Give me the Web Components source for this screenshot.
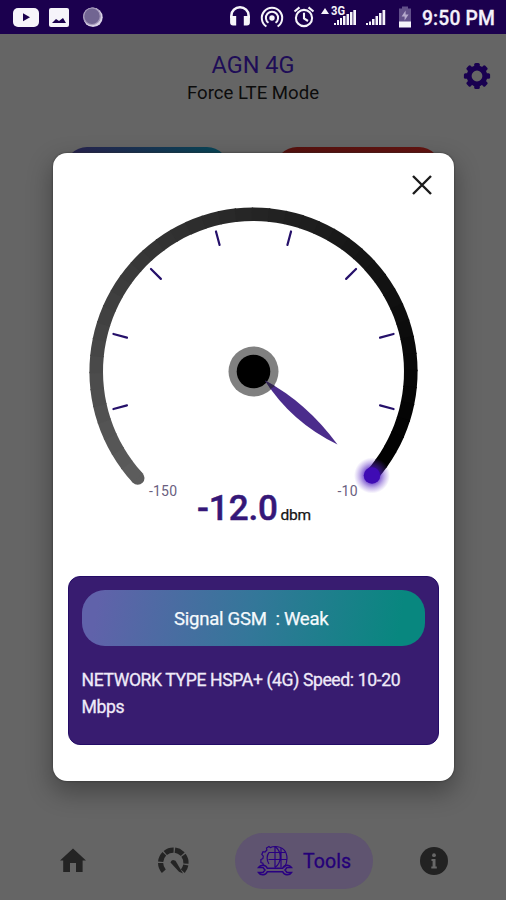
<!DOCTYPE html>
<html lang="en"><head><meta charset="utf-8"><title>AGN 4G</title>
<style>
body{margin:0;width:506px;height:900px;overflow:hidden;font-family:Roboto,"Liberation Sans",sans-serif;background:#656565}
</style></head><body>
<agn-app></agn-app>
<script>
const define=(name,html)=>customElements.define(name,class extends HTMLElement{
  constructor(){super();const t=document.createElement('template');t.innerHTML=html;
    this.attachShadow({mode:'open'}).append(t.content.cloneNode(true));}
});

define('status-bar',`<style>
:host{display:flex;height:34px;box-sizing:border-box;background:#1b004e;color:#f4f0fa;padding-left:13px;align-items:flex-start}
svg{display:block;flex:none;height:34px;fill:#f6f4fa;stroke:none}
.time{font-size:19.3px;font-weight:500;line-height:34px;padding-top:2px;margin-left:10px;white-space:nowrap;letter-spacing:.15px;-webkit-text-stroke:.3px}
</style>
<svg width="26" viewBox="0 0 26 34"><rect y="8" width="26" height="19" rx="5"/><path d="M10 13.2v8l7-4z" fill="#1b004e"/></svg>
<svg width="20" viewBox="0 0 20 34" style="margin-left:10px"><rect y="8" width="20" height="19" rx="2"/><path d="M3 23l4-4 3 2 4-3 3 5z" fill="#1b004e"/></svg>
<svg width="20" viewBox="0 0 20 34" style="margin-left:14px"><circle cx="10" cy="17.3" r="9.7" fill="#d9d2e6"/><circle cx="9" cy="16.3" r="8.5" fill="#716592"/><circle cx="9" cy="16.3" r="8.3" fill="none" stroke="#a89cbd" stroke-width="1.2"/></svg>
<svg width="20" viewBox="0 0 20 34" style="margin-left:127px"><path d="M1.4 18v-2.600a8.6 8.2 0 0 1 17.2 0V18" fill="none" stroke="#f6f4fa" stroke-width="2.6"/><path d="M.1 16h6.1v9.6H3.1a3 3 0 0 1-3-3zM13.8 16h6.1v6.6a3 3 0 0 1-3 3h-3.1z"/></svg>
<svg width="24" viewBox="0 0 24 34" style="margin-left:10px"><g fill="none" stroke="#f6f4fa" stroke-width="2"><path d="M6.4 26.5a10.2 10.2 0 1 1 11.2 0"/><path d="M8.5 22.8a6.1 6.1 0 1 1 7 0"/></g><circle cx="12" cy="18" r="2.7"/></svg>
<svg width="22" viewBox="0 0 22 34" style="margin-left:9px"><g fill="none" stroke="#f6f4fa" stroke-width="2.1"><circle cx="11" cy="18" r="8.1"/><path d="M11 12.8v5.7l4 2.5M1.5 11.5l5-4.1M20.5 11.5l-5-4.1"/></g></svg>
<svg width="36" viewBox="0 0 36 34" style="margin-left:6px"><path d="M0 14l4-6 4 6zM16 20h2v5h-2zM19 18h2v7h-2zM22 16h2.500v9H22zM25.5 14H28v11h-2.5zM29 12h2.5v13H29zM32.3 10h2.7v15h-2.7zM13 23h2v2h-2z"/><text x="10" y="14.500" font-size="12" font-weight="700" font-family="Roboto,sans-serif" textLength="14" lengthAdjust="spacingAndGlyphs">3G</text></svg>
<svg width="20" viewBox="0 0 20 34" style="margin-left:9px"><path d="M0 23h2v2H0zM3 21.5h2V25H3zM6 19h2.5v6H6zM9.5 16H12v9H9.5zM13 13h2.5v12H13zM16.5 10h2.7v15h-2.7z"/></svg>
<svg width="14" viewBox="0 0 14 34" style="margin-left:12px"><path d="M4 6.5h6v2h3v18H1v-18h3z" fill="#62508a"/><path d="M1 21.5h12v6H1z"/><path d="M7.6 10.5l-4 6h3v4l4-6h-3z" fill="#b5a9cc"/></svg>
<span class="time">9:50 PM</span>`);

define('page-header',`<style>
:host{display:grid;grid-template-columns:60px 1fr 60px;height:113px;box-sizing:border-box;padding-top:17px;text-align:center}
h1{margin:0;font-weight:400;font-size:23.5px;line-height:28px;color:#1e0d57}
p{margin:0;font-size:18.6px;line-height:29px;color:#0c0c0c}
svg{margin:11px 0 0 17px;width:28px;height:28px}
</style><span></span><div><h1>AGN 4G</h1><p>Force LTE Mode</p></div>
<svg viewBox="-14 -14 28 28"><g fill="#190050"><circle r="7.9" fill="none" stroke="#190050" stroke-width="5"/>
<g id="t"><rect x="-2.8" y="-13.1" width="5.6" height="5" rx="1.5"/><rect x="-2.8" y="8.1" width="5.6" height="5" rx="1.5"/><rect x="-13.1" y="-2.8" width="5" height="5.6" rx="1.5"/><rect x="8.1" y="-2.8" width="5" height="5.6" rx="1.5"/></g><use href="#t" transform="rotate(45)"/></g></svg>`);

define('mode-buttons',`<style>
:host{display:grid;grid-template-columns:164px 166px;gap:46px;padding-left:65px;height:673px;align-items:start;box-sizing:border-box}
i{display:block;height:60px;border-radius:22px}
.a{background:linear-gradient(90deg,#29224f,#064858)}.b{background:linear-gradient(90deg,#56110e,#641411)}
</style><i class="a"></i><i class="b"></i>`);

define('nav-bar',`<style>
:host{display:flex;height:80px;align-items:center;box-sizing:border-box;padding:2px 0 0 58px}
svg{display:block;flex:none}
.tools{display:flex;align-items:center;width:138px;height:56px;box-sizing:border-box;border-radius:28px;background:#5f5470;margin-left:46px;padding-left:22px;color:#240078;font-size:19.5px;letter-spacing:.1px;-webkit-text-stroke:.3px}
.tools span{margin-left:10px;padding-top:1px}
</style>
<svg width="30" height="30" viewBox="0 0 30 30"><path d="M15 2.5l13 12h-3.400V26H18v-9h-6v9H5.200V14.500H2z" fill="#242424"/></svg>
<svg width="34" height="34" viewBox="-17 -17 34 34" style="margin-left:68px"><path d="M-9.2 10.2A12.700 12.700 0 1 1 9.800 10.2" fill="none" stroke="#242424" stroke-width="5.200" stroke-dasharray="8.900 1.300"/><path d="M-2.500 1.500Q-2-.8 0-1l2.500.8L10 12.500l-4-1.800z" fill="#242424"/></svg>
<div class="tools" style="margin-left:45px"><svg width="36" height="34" viewBox="0 0 36 34"><g fill="none" stroke="#290081" stroke-width="1.200">
<path d="M18 2.500C16 2.600 14.500 3 13.300 3.600L12 2.500 9.500 4l.4 2L8 8 6 7.700 4.800 10.500l1.500 1.600-.4 2.400-2 1v3l2 .8.600 2.500M18 2.500v21M18 2.500c8 0 12 5 12 12 0 3-.8 6-2.500 9"/>
<path d="M18 2.500c7 5 7 16 0 21M24 4v19.500M12 8.500h16M11.500 15.500h18.500M12 8.500c-2.500 3-2.500 8 0 11.500"/></g><g fill="none" stroke="#290081" stroke-width="1.500">
<path d="M1.500 23.500H6l2 2.500-2 2.500H1.500a5 5 0 0 0 8.800-.8h15.400a5 5 0 0 0 8.800.8H30L28 26l2-2.500h4.500a5 5 0 0 0-8.800.8H10.300a5 5 0 0 0-8.800-.8z"/></g></svg><span>Tools</span></div>
<svg width="28" height="28" viewBox="0 0 28 28" style="margin-left:47px"><circle cx="14" cy="14" r="14" fill="#222"/><g fill="#686868"><circle cx="14" cy="8.200" r="1.900"/><path d="M11.500 12h4v7.500h1.300v2h-5.500v-2h1.300v-5.500h-1.100z"/></g></svg>`);

define('signal-gauge',`<style>
:host{display:block;height:345px;width:400px}
svg{display:block}text{font-family:Roboto,sans-serif}
</style>
<svg width="400" height="345" viewBox="53 193 400 345">
<defs><radialGradient id="glow"><stop offset=".4" stop-color="#4510bd" stop-opacity=".75"/><stop offset=".7" stop-color="#5a2ac4" stop-opacity=".35"/><stop offset="1" stop-color="#6a3bd0" stop-opacity="0"/></radialGradient></defs>
<circle cx="137.700" cy="478" r="6.800" fill="#5c5c5c"/><circle cx="371.500" cy="475.500" r="6.800"/>
<g id="arc" fill="none" stroke-width="13.600"></g>
<g id="marks" stroke="#25106a" stroke-width="2.200" stroke-linecap="round"></g>
<circle cx="253.500" cy="371.500" r="25" fill="#808080"/><circle cx="253.500" cy="371.500" r="16.800"/>
<path d="M265 380.500Q306 402 337.500 444.500Q291 422 265 380.500z" fill="#4b2c8c"/><path d="M265 380.500l10 5.500-4.500 3z" fill="#32264e"/>
<circle cx="372" cy="475.500" r="18" fill="url(#glow)"/><circle cx="372" cy="475.500" r="8.300" fill="#3f0bb4"/>
<g fill="#6a6080" font-size="14"><text x="149" y="496" textLength="28">-150</text><text x="337.500" y="496" textLength="20">-10</text></g>
<text x="197" y="520" font-size="35" font-weight="500" fill="#351778" stroke="#351778" stroke-width=".5" textLength="81">-12.0</text>
<text x="280.500" y="519.500" font-size="15.500" fill="#161616" stroke="#161616" stroke-width=".25" textLength="30.500">dbm</text>
</svg>`);
customElements.define('gauge-dial',class extends customElements.get('signal-gauge'){
  connectedCallback(){
    const cx=253.5,cy=371.5,ns='http://www.w3.org/2000/svg';
    const at=(r,deg)=>[cx+r*Math.cos(deg*Math.PI/180),cy+r*Math.sin(deg*Math.PI/180)];
    const marks=this.shadowRoot.getElementById('marks'),arc=this.shadowRoot.getElementById('arc');
    for(const a of [-195,-165,-135,-105,-75,-45,-15,15]){
      const l=document.createElementNS(ns,'path');
      l.setAttribute('d',`M${at(131,a)}L${at(145,a)}`);marks.append(l);
    }
    const start=-222.600,end=41.400,n=44,step=(end-start)/n;
    for(let i=0;i<n;i++){
      const a=start+i*step,b=Math.min(end,a+step+.5),c=Math.round(92*Math.pow(1-i/(n-1),1.300));
      const p=document.createElementNS(ns,'path');
      p.setAttribute('d',`M${at(157.3,a)}A157.300 157.300 0 0 1 ${at(157.3,b)}`);
      p.setAttribute('stroke',`rgb(${c},${c},${c})`);arc.append(p);
    }
  }
});

define('signal-panel',`<style>
:host{display:block;box-sizing:border-box;width:370.500px;height:169px;margin:37.500px 0 0 15px;border-radius:12px;background:#381c70;border:1px solid #240c66;padding:13px 12.500px;color:#efeaf8}
.pill{height:56px;border-radius:23px;background:linear-gradient(100deg,#6062aa 5%,#337799 50%,#08877f 92%);display:flex;align-items:center;justify-content:center;font-size:18.600px;letter-spacing:-.28px;white-space:pre;color:#f4f9fc;padding:3px 4px 0 0;box-sizing:border-box;-webkit-text-stroke:.25px}
p{margin:21px 0 0;font-size:17.600px;line-height:27px;letter-spacing:-.39px;-webkit-text-stroke:.3px}
</style><div class="pill"><slot name="signal"></slot></div><p><slot></slot></p>`);

define('modal-card',`<style>
:host{display:block;position:absolute;left:53px;top:153px;width:400.500px;height:628px;border-radius:14px;background:#fff;box-shadow:0 10px 24px 2px rgba(0,0,0,.3),0 0 2px #333}
header{height:40px;display:flex;justify-content:flex-end;align-items:flex-end}
header svg{margin:0 20.500px -3px 0}
</style><header><svg width="22" height="22" viewBox="0 0 22 22"><path d="M2 2l18 18M20 2L2 20" stroke="#1b1b1b" stroke-width="2.400"/></svg></header><slot></slot>`);

define('agn-app',`<style>:host{display:block;position:relative;width:506px;height:900px;background:#656565}span{white-space:pre}</style>
<status-bar></status-bar><page-header></page-header><mode-buttons></mode-buttons><nav-bar></nav-bar>
<modal-card><gauge-dial></gauge-dial><signal-panel><span slot="signal">Signal GSM  : Weak</span>NETWORK TYPE HSPA+ (4G) Speed: 10-20 Mbps</signal-panel></modal-card>`);
</script></body></html>
